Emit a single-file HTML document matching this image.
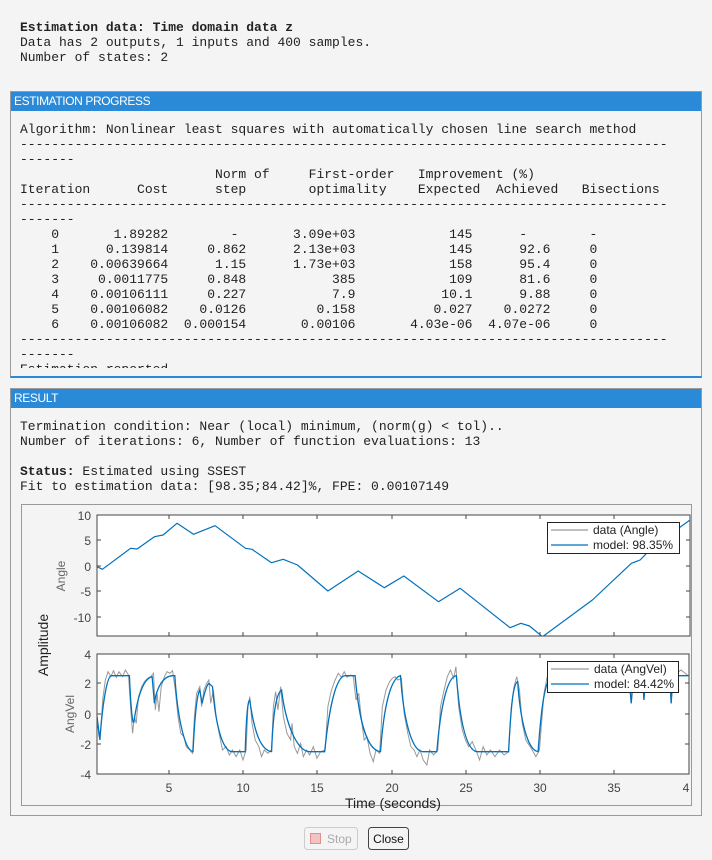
<!DOCTYPE html>
<html><head><meta charset="utf-8">
<style>
*{margin:0;padding:0;box-sizing:border-box}
body{width:712px;height:860px;background:#f4f4f4;position:relative;overflow:hidden;font-family:"Liberation Mono",monospace;font-size:13px;color:#222}
pre{font-family:"Liberation Mono",monospace;font-size:13px;line-height:15px;color:#222;margin:0}
.abs{position:absolute}
.panel{position:absolute;left:10px;width:692px;border:1px solid #9a9a9a;background:#f4f4f4;overflow:hidden}
.hdr{height:19px;background:#2a8ad8;color:#fff;font-family:"Liberation Sans",sans-serif;font-size:12px;letter-spacing:-0.4px;line-height:19px;padding-left:3px}
.ax{font-family:"Liberation Sans",sans-serif;font-size:12px;fill:#444}
</style></head><body>
<pre class="abs" style="left:20px;top:20px"><b>Estimation data: Time domain data z</b>
Data has 2 outputs, 1 inputs and 400 samples.
Number of states: 2</pre>

<div class="panel" style="top:91px;height:287px;border-bottom:2px solid #2a8ad8">
<div class="hdr">ESTIMATION PROGRESS</div>
<pre style="position:absolute;left:9px;top:30px;height:246px;overflow:hidden">Algorithm: Nonlinear least squares with automatically chosen line search method
-----------------------------------------------------------------------------------
-------
                         Norm of     First-order   Improvement (%)
Iteration      Cost      step        optimality    Expected  Achieved   Bisections
-----------------------------------------------------------------------------------
-------
    0       1.89282        -       3.09e+03            145      -        -
    1      0.139814     0.862      2.13e+03            145      92.6     0
    2    0.00639664      1.15      1.73e+03            158      95.4     0
    3     0.0011775     0.848           385            109      81.6     0
    4    0.00106111     0.227           7.9           10.1      9.88     0
    5    0.00106082    0.0126         0.158          0.027    0.0272     0
    6    0.00106082  0.000154       0.00106       4.03e-06  4.07e-06     0
-----------------------------------------------------------------------------------
-------
Estimation reported.</pre>
</div>

<div class="panel" style="top:388px;height:428px">
<div class="hdr">RESULT</div>
<pre style="position:absolute;left:9px;top:30px">Termination condition: Near (local) minimum, (norm(g) &lt; tol)..
Number of iterations: 6, Number of function evaluations: 13

<b>Status:</b> Estimated using SSEST
Fit to estimation data: [98.35;84.42]%, FPE: 0.00107149</pre>
</div>

<svg class="abs" style="left:0;top:0" width="712" height="860">
<rect x="21.5" y="504.5" width="670" height="301" fill="#f4f4f4" stroke="#999"/>
<rect x="97" y="515" width="593" height="121" fill="#fff" stroke="#444"/>
<rect x="97" y="654" width="592" height="120" fill="#fff" stroke="#444"/>
<g stroke="#444" stroke-width="1">
<path d="M169,515v4M243,515v4M317,515v4M392,515v4M466,515v4M540,515v4M614,515v4M169,636v-4M243,636v-4M317,636v-4M392,636v-4M466,636v-4M540,636v-4M614,636v-4M97,540h4M97,566h4M97,591h4M97,617h4M690,540h-4M690,566h-4M690,591h-4M690,617h-4"/>
<path d="M169,654v4M243,654v4M317,654v4M392,654v4M466,654v4M540,654v4M614,654v4M169,774v-4M243,774v-4M317,774v-4M392,774v-4M466,774v-4M540,774v-4M614,774v-4M97,683h4M97,714h4M97,744h4M689,683h-4M689,714h-4M689,744h-4"/>
</g>
<g class="ax" text-anchor="end">
<text x="91" y="520">10</text><text x="91" y="545">5</text><text x="91" y="571">0</text><text x="91" y="596">-5</text><text x="91" y="622">-10</text>
<text x="91" y="659">4</text><text x="91" y="688">2</text><text x="91" y="719">0</text><text x="91" y="749">-2</text><text x="91" y="779">-4</text>
</g>
<g class="ax" text-anchor="middle">
<text x="169" y="792">5</text><text x="243" y="792">10</text><text x="317" y="792">15</text><text x="392" y="792">20</text><text x="466" y="792">25</text><text x="540" y="792">30</text><text x="614" y="792">35</text><text x="686" y="792">4</text>
</g>
<text x="393" y="808" font-family="Liberation Sans" font-size="14" fill="#222" text-anchor="middle">Time (seconds)</text>
<text transform="translate(48,645) rotate(-90)" font-family="Liberation Sans" font-size="14" fill="#222" text-anchor="middle">Amplitude</text>
<text transform="translate(65,576) rotate(-90)" font-family="Liberation Sans" font-size="12" fill="#666" text-anchor="middle">Angle</text>
<text transform="translate(74,714) rotate(-90)" font-family="Liberation Sans" font-size="12" fill="#666" text-anchor="middle">AngVel</text>
<clipPath id="c1"><rect x="97" y="515" width="593" height="121"/></clipPath>
<clipPath id="c2"><rect x="97" y="654" width="592" height="120"/></clipPath>
<g clip-path="url(#c1)" fill="none" stroke-width="1.2" stroke-linejoin="round">
<path stroke="#0072bd" d="M97,566.7 L102.4,569.3 L130.6,548.3 L137.1,549 L154.4,536.7 L163.1,535 L177,523.3 L193.5,534.3 L215.1,525.7 L245.5,548.3 L252,549.3 L271.5,562.7 L283.2,559.3 L297.5,565 L327.9,591 L358.2,571 L384.3,587.7 L403.8,576 L438.5,601.7 L460.2,588.3 L510,627.7 L520.9,623.3 L529.5,626 L542.5,636.7 L592.4,600 L631.4,563.3 L640.1,560 L653.1,546.7 L690,520"/>
</g>
<g clip-path="url(#c2)">
<g transform="translate(0,640) scale(0.4541,0.33333)" fill="none">
<path stroke="#999" stroke-width="1" vector-effect="non-scaling-stroke" d="M213,222 L218,290 L222,270 L226,180 L232,120 L238,95 L244,110 L250,92 L256,112 L262,95 L270,110 L276,90 L283,105 L288,210 L292,280 L296,230 L300,250 L305,170 L312,140 L318,125 L325,115 L332,110 L338,100 L342,210 L346,160 L350,215 L355,140 L362,110 L368,95 L374,100 L380,92 L386,150 L392,230 L398,280 L405,290 L410,320 L418,330 L424,340 L428,230 L433,160 L440,140 L444,200 L449,150 L455,130 L460,120 L464,190 L470,150 L476,230 L484,290 L490,330 L498,320 L505,345 L512,330 L520,350 L528,330 L535,360 L542,330 L546,200 L550,170 L555,250 L562,300 L570,320 L576,350 L582,330 L590,340 L598,330 L602,200 L607,155 L612,210 L618,140 L624,230 L632,280 L640,300 L643,250 L648,320 L655,340 L662,310 L668,350 L675,330 L682,345 L690,320 L698,355 L706,335 L716,330 L722,200 L730,150 L738,120 L745,100 L752,112 L758,95 L764,112 L772,105 L778,110 L784,180 L790,160 L796,240 L802,300 L808,290 L815,340 L822,365 L828,330 L836,340 L842,200 L850,150 L858,125 L864,115 L870,110 L876,120 L884,115 L890,220 L898,280 L905,320 L912,330 L918,350 L925,330 L932,360 L940,375 L946,330 L955,345 L964,330 L970,200 L978,150 L985,110 L992,90 L999,115 L1004,80 L1010,200 L1018,270 L1025,300 L1032,320 L1040,305 L1048,330 L1056,360 L1064,320 L1072,345 L1080,330 L1090,350 L1100,330 L1110,345 L1120,335 L1126,200 L1132,140 L1138,110 L1144,150 L1150,250 L1158,300 L1165,315 L1172,330 L1180,350 L1188,330 L1192,260 L1198,160 L1205,110 L1215,100 L1300,107 L1385,107 L1390,190 L1395,107 L1415,107 L1418,180 L1422,107 L1475,107 L1478,190 L1482,107 L1500,90 L1518,110"/>
<path stroke="#0072bd" stroke-width="1.3" vector-effect="non-scaling-stroke" d="M213,222 L220,300 C225,200 235,110 245,107 L285,107 C288,200 292,260 295,245 C305,150 320,115 335,110 L340,190 C345,140 360,108 380,107 L385,107 C390,220 405,330 425,335 C430,200 435,160 440,150 L445,190 C450,160 455,135 460,130 L468,140 C475,260 490,330 510,335 L540,335 C543,200 547,180 550,180 C560,280 575,330 598,335 C602,200 610,160 620,150 C630,260 655,330 680,335 L715,335 C725,200 740,110 760,107 L782,107 C790,230 805,330 838,335 C845,200 860,115 882,107 C888,230 905,330 930,335 L962,335 C970,200 985,110 1005,107 C1012,230 1025,330 1050,335 L1120,335 C1125,200 1130,130 1140,125 C1145,230 1160,330 1185,335 C1192,200 1200,120 1215,110 L1385,107 L1390,190 L1395,107 L1415,107 L1418,180 L1422,107 L1475,107 L1478,190 L1482,107 L1518,107"/>
</g>
</g>
<g font-family="Liberation Sans" font-size="12" fill="#222">
<rect x="547.5" y="522.5" width="132" height="31" fill="#fff" stroke="#222"/>
<line x1="551" y1="530" x2="588" y2="530" stroke="#999" stroke-width="1.2"/>
<line x1="551" y1="545" x2="588" y2="545" stroke="#0072bd" stroke-width="1.2"/>
<text x="593" y="534">data (Angle)</text><text x="593" y="549">model: 98.35%</text>
<rect x="547.5" y="661.5" width="131" height="31" fill="#fff" stroke="#222"/>
<line x1="551" y1="669" x2="589" y2="669" stroke="#999" stroke-width="1.2"/>
<line x1="551" y1="684" x2="589" y2="684" stroke="#0072bd" stroke-width="1.2"/>
<text x="594" y="673">data (AngVel)</text><text x="594" y="688">model: 84.42%</text>
</g>
<rect x="304.5" y="827.5" width="53" height="22" rx="3" fill="#f4f4f4" stroke="#ccc"/>
<rect x="310.5" y="833.5" width="10" height="10" fill="#f3c2c2" stroke="#e08e8e"/>
<text x="327" y="843" font-family="Liberation Sans" font-size="12" fill="#aaa">Stop</text>
<rect x="368.5" y="827.5" width="40" height="22" rx="3" fill="#f4f4f4" stroke="#444"/>
<text x="388.5" y="843" font-family="Liberation Sans" font-size="12" fill="#111" text-anchor="middle">Close</text>
</svg>
</body></html>
